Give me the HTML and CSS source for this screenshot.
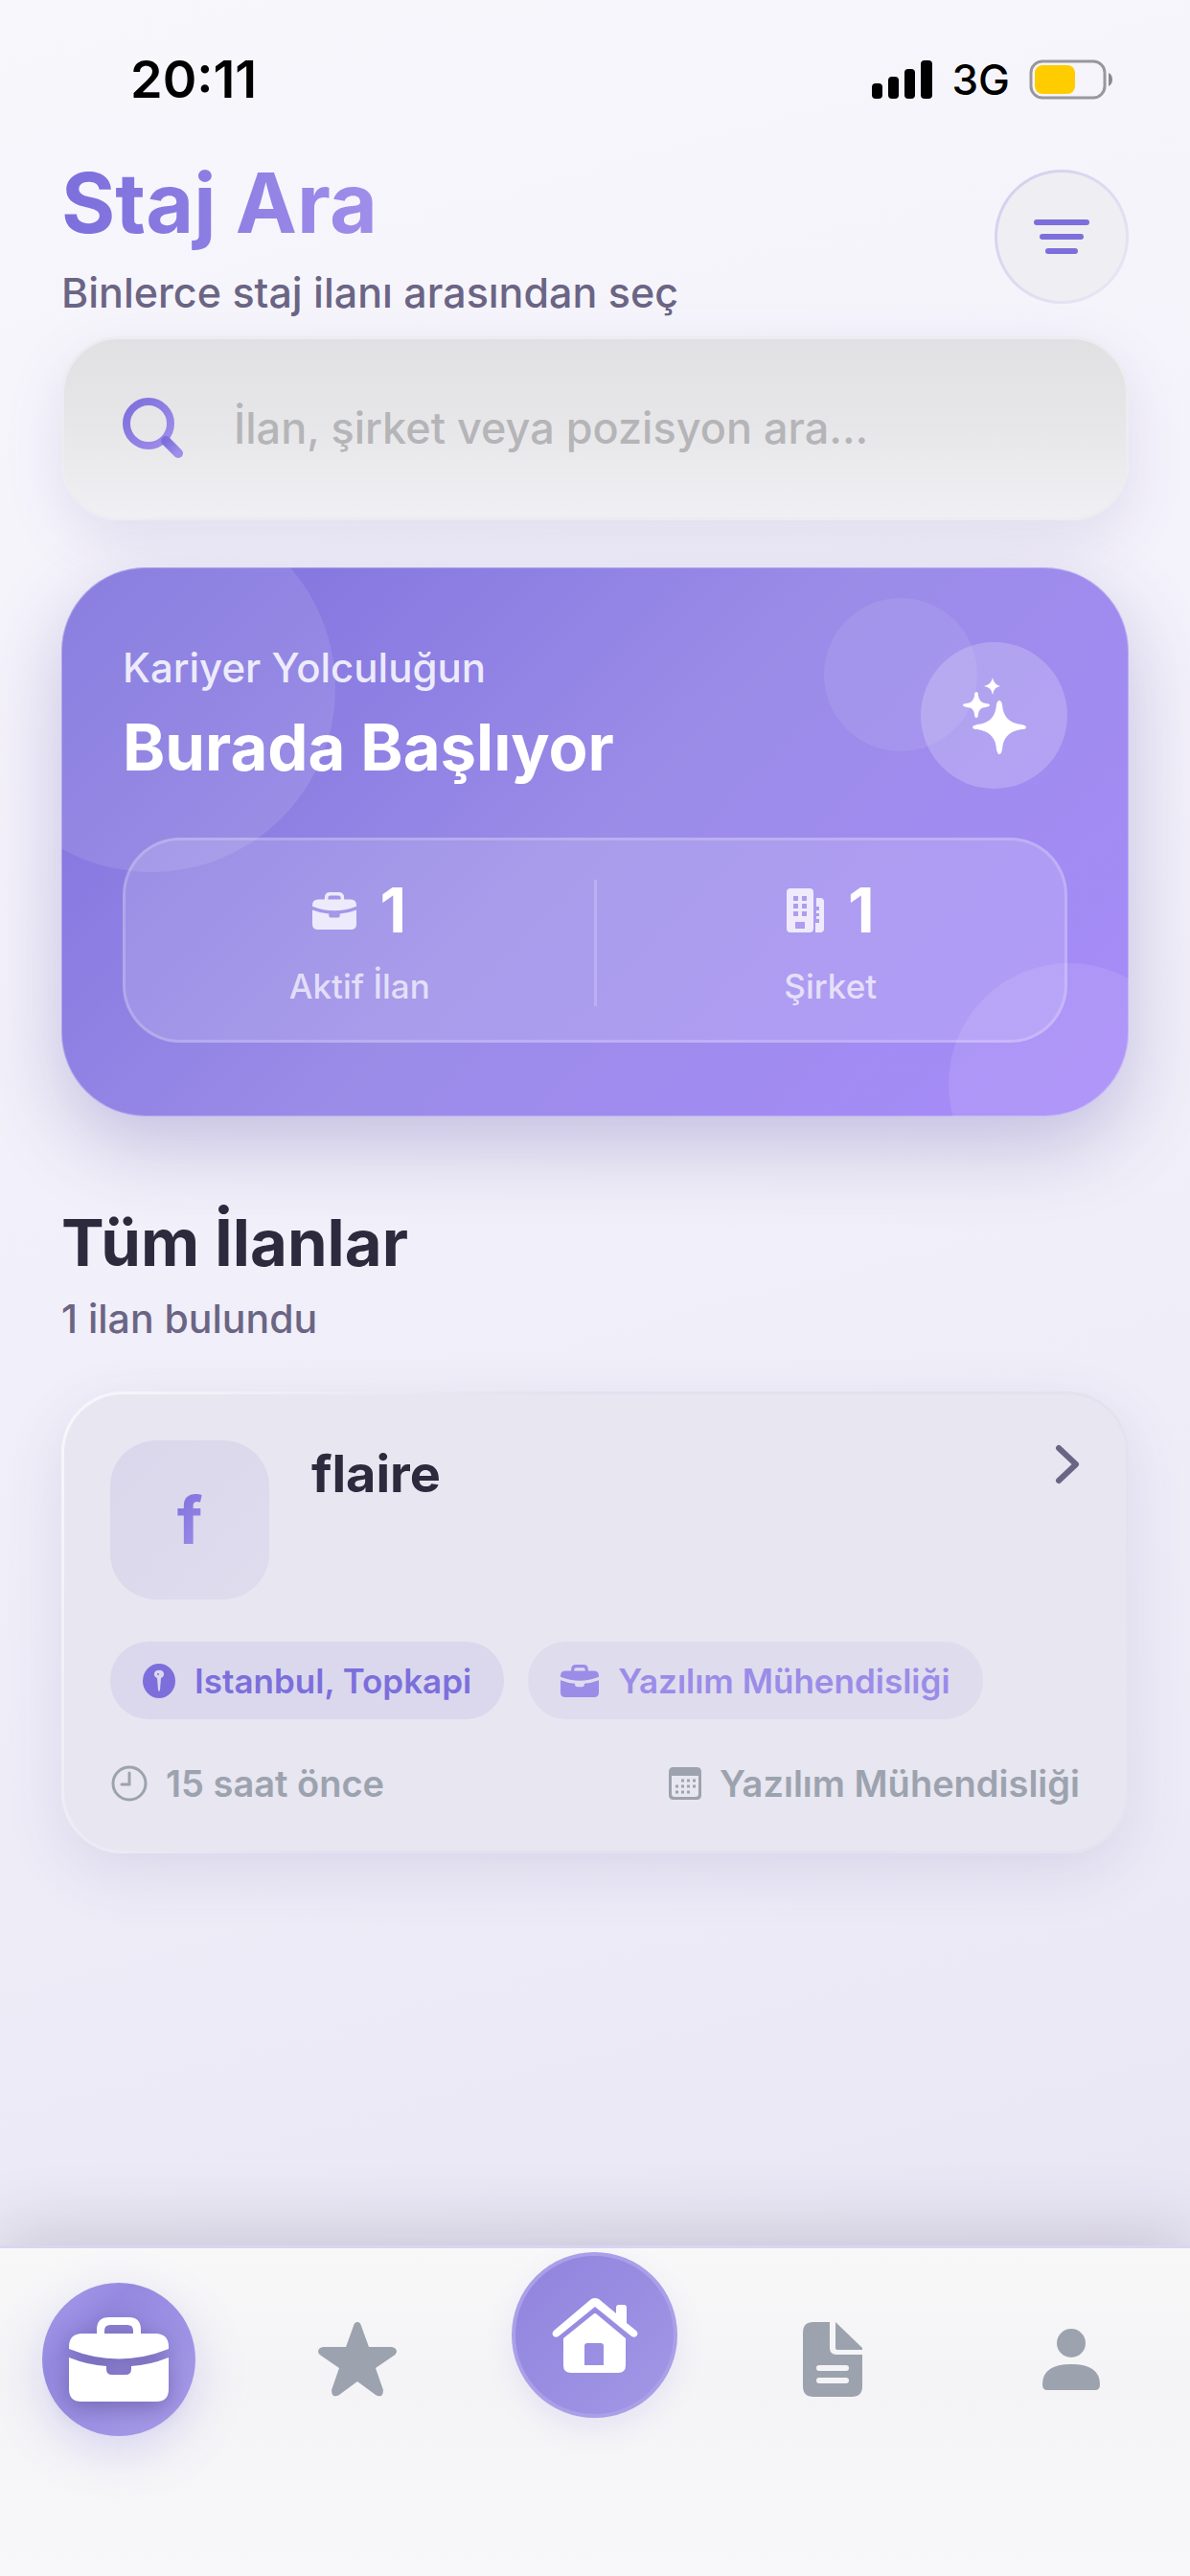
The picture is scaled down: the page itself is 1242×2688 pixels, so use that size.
FILE: index.html
```html
<!DOCTYPE html>
<html lang="tr">
<head>
    <meta charset="UTF-8">
    <meta name="viewport" content="width=device-width, initial-scale=1.0">
    <title>Staj Ara</title>
    <link rel="stylesheet" href="styles.css">
</head>
<body>

<!-- shared icons -->
<svg class="sprite" aria-hidden="true">
    <defs>
        <linearGradient id="violet" x1="0" y1="0" x2="1" y2="1">
            <stop offset="0" stop-color="#7c6fdc"/>
            <stop offset="1" stop-color="#a08eea"/>
        </linearGradient>
        <symbol id="briefcase" viewBox="0 0 104 88">
            <path fill-rule="evenodd" d="M29 17V13Q29 0 42 0H62Q75 0 75 13V17H90Q104 17 104 31V33Q52 54 0 33V31Q0 17 14 17ZM37 17H67V14Q67 8 61 8H43Q37 8 37 14Z"/>
            <path d="M0 42Q20 50 39 51V54Q39 60 45 60H59Q65 60 65 54V51Q84 50 104 42V75Q104 88 91 88H13Q0 88 0 75Z"/>
        </symbol>
    </defs>
</svg>

<div class="app">
    <div class="status-bar">
        <span class="time">20:11</span>
        <div class="status-icons">
            <svg width="64" height="40" viewBox="0 0 64 40">
                <rect x="0" y="24" width="11" height="16" rx="4"/>
                <rect x="17" y="17" width="11" height="23" rx="4"/>
                <rect x="34" y="9" width="11" height="31" rx="4"/>
                <rect x="51" y="0" width="12" height="40" rx="4"/>
            </svg>
            <span class="network">3G</span>
            <svg width="88" height="42" viewBox="0 0 88 42">
                <rect x="2" y="2" width="77" height="38" rx="12" fill="none" stroke="#98979b" stroke-width="3"/>
                <rect x="6" y="6" width="42" height="30" rx="8" fill="#ffcc00"/>
                <path d="M83 14Q87 16 87 21T83 28Z" fill="#8a8a8d"/>
            </svg>
        </div>
    </div>

    <header class="header">
        <div>
            <h1>Staj Ara</h1>
            <p class="subtitle">Binlerce staj ilanı arasından seç</p>
        </div>
        <button class="filter-btn" type="button" aria-label="Filtrele">
            <svg width="60" height="38" viewBox="0 0 60 38" fill="none" stroke="#7c6fdc" stroke-width="6" stroke-linecap="round">
                <path d="M4 4H56M10 19H50M16 34H44"/>
            </svg>
        </button>
    </header>

    <main class="content">
        <label class="search">
            <svg width="64" height="64" viewBox="0 0 64 64" fill="none" stroke="url(#violet)" stroke-linecap="round">
                <circle cx="27" cy="27" r="23" stroke-width="8"/>
                <path d="M45 45L58 58" stroke-width="10"/>
            </svg>
            <input type="search" placeholder="İlan, şirket veya pozisyon ara..." aria-label="İlan ara">
        </label>

        <section class="hero">
            <span class="bubble bubble-left"></span>
            <span class="bubble bubble-top"></span>
            <span class="bubble bubble-right"></span>

            <div class="hero-top">
                <div class="hero-text">
                    <p>Kariyer Yolculuğun</p>
                    <h2>Burada Başlıyor</h2>
                </div>
                <div class="hero-icon">
                    <svg width="66" height="80" viewBox="0 0 66 80" fill="#fff">
                        <path d="M38 24Q40 24 41 28Q42 47 61 49Q66 50 66 52Q66 54 61 54Q42 57 41 75Q40 80 38 80Q36 80 35 75Q34 57 15 54Q10 54 10 52Q10 50 15 49Q34 47 35 28Q36 24 38 24Z"/>
                        <path d="M14 15Q16 15 16 19Q17 26 24 27Q28 27 28 29Q28 30 24 31Q17 31 16 38Q16 42 14 42Q12 42 12 38Q11 31 4 31Q0 30 0 29Q0 27 4 27Q11 26 12 19Q12 15 14 15Z"/>
                        <path d="M31 0Q32 7 39 9Q32 10 31 18Q30 10 22 9Q30 7 31 0Z"/>
                    </svg>
                </div>
            </div>

            <div class="stats">
                <div class="stat">
                    <div class="stat-value">
                        <svg width="46" height="39"><use href="#briefcase"/></svg>
                        <strong>1</strong>
                    </div>
                    <span>Aktif İlan</span>
                </div>
                <div class="stat">
                    <div class="stat-value">
                        <svg width="40" height="46" viewBox="0 0 40 46">
                            <path fill-rule="evenodd" d="M4 0H24Q28 0 28 4V42Q28 46 24 46H4Q0 46 0 42V4Q0 0 4 0ZM7 8V13H12V8ZM16 8V13H21V8ZM7 16V21H12V16ZM16 16V21H21V16ZM7 24V29H12V24ZM16 24V29H21V24ZM9 35V42H19V35Z"/>
                            <path d="M31 10H35Q39 10 39 14V42Q39 46 35 46H30V36H34V32H31V29H34V26H31V23H34V19H31Z"/>
                        </svg>
                        <strong>1</strong>
                    </div>
                    <span>Şirket</span>
                </div>
            </div>
        </section>

        <div class="section-title">
            <h2>Tüm İlanlar</h2>
            <p>1 ilan bulundu</p>
        </div>

        <article class="job-card">
            <div class="job-top">
                <div class="job-logo"><span>f</span></div>
                <h3>flaire</h3>
                <svg class="chevron" width="26" height="42" viewBox="0 0 26 42" fill="none" stroke="#6b6584" stroke-width="6" stroke-linecap="round" stroke-linejoin="round">
                    <path d="M4 4L22 21L4 38"/>
                </svg>
            </div>
            <div class="tags">
                <span class="tag tag-location">
                    <svg width="34" height="36" viewBox="0 0 34 36">
                        <ellipse cx="17" cy="18" rx="17" ry="18" fill="#7c6fdc"/>
                        <path d="M17 7A4 4 0 0 1 19 15L18 27Q17 31 16 27L15 15A4 4 0 0 1 17 7Z" fill="#dbd8ed"/>
                        <circle cx="16" cy="11" r="1" fill="#7c6fdc"/>
                    </svg>
                    Istanbul, Topkapi
                </span>
                <span class="tag tag-field">
                    <svg width="40" height="34"><use href="#briefcase"/></svg>
                    Yazılım Mühendisliği
                </span>
            </div>
            <div class="job-footer">
                <span class="meta">
                    <svg width="40" height="40" viewBox="0 0 40 40" fill="none" stroke="#9ca3af" stroke-width="3" stroke-linecap="round">
                        <circle cx="20" cy="20" r="17"/>
                        <path d="M20 9V21H12"/>
                    </svg>
                    15 saat önce
                </span>
                <span class="meta">
                    <svg width="36" height="36" viewBox="0 0 36 36" fill="#9ca3af">
                        <path fill-rule="evenodd" d="M6 1H30Q35 1 35 6V30Q35 35 30 35H6Q1 35 1 30V6Q1 1 6 1ZM4 10V29Q4 32 7 32H29Q32 32 32 29V10Z"/>
                        <path d="M14 15H29M8 21H29M8 27H23" fill="none" stroke="#9ca3af" stroke-width="3" stroke-dasharray="3 3"/>
                    </svg>
                    Yazılım Mühendisliği
                </span>
            </div>
        </article>
    </main>

    <nav class="tab-bar">
        <a class="tab tab-active" href="#" aria-label="İlanlar">
            <svg width="104" height="88"><use href="#briefcase"/></svg>
        </a>
        <a class="tab" href="#" aria-label="Favoriler">
            <svg width="82" height="78" viewBox="0 0 82 78">
                <path d="M41 0Q44 0 45 4L53 26H77Q82 27 82 31Q81 34 79 35L60 48L68 71Q68 75 66 77Q63 78 60 76L41 62L22 76Q19 78 16 77Q14 75 14 71L22 48L3 35Q0 33 0 31Q0 27 5 26H29L37 4Q38 0 41 0Z"/>
            </svg>
        </a>
        <a class="tab tab-home" href="#" aria-label="Ana sayfa">
            <svg width="90" height="78" viewBox="0 0 90 78" fill="#fff">
                <path d="M41 1Q45 -1 49 1L67 16V10Q67 7 70 7H75Q78 7 78 10V26L88 34Q91 37 88 40Q85 42 82 39L45 9L8 39Q5 42 2 40Q-1 37 2 34Z"/>
                <path fill-rule="evenodd" d="M43 17Q45 15 47 17L77 42V70Q77 78 69 78H20Q12 78 12 70V42ZM37 47Q34 47 34 50V70H54V50Q54 47 51 47Z"/>
            </svg>
        </a>
        <a class="tab" href="#" aria-label="Başvurular">
            <svg width="62" height="78" viewBox="0 0 62 78">
                <path fill-rule="evenodd" d="M11 0H28V27Q28 34 35 34H62V67Q62 78 51 78H11Q0 78 0 67V11Q0 0 11 0ZM17 45Q14 45 14 48T17 51H45Q48 51 48 48T45 45ZM17 58Q14 58 14 61T17 64H45Q48 64 48 61T45 58Z"/>
                <path d="M34 0L62 27V29H36Q34 29 34 27Z"/>
            </svg>
        </a>
        <a class="tab" href="#" aria-label="Profil">
            <svg width="60" height="66" viewBox="0 0 60 66">
                <circle cx="30" cy="16" r="15"/>
                <path d="M0 59Q0 38 30 38T60 59Q60 65 55 65H5Q0 65 0 59Z"/>
            </svg>
        </a>
    </nav>
</div>

</body>
</html>
```
FILE: styles.css
```css
* {
    box-sizing: border-box;
    margin: 0;
    padding: 0;
}

body {
    font-family: Inter, "Liberation Sans", sans-serif;
    font-weight: 500;
    color: #2d2a3e;
    background: #f3f1fa;
}

svg {
    display: block;
    flex-shrink: 0;
}

.sprite {
    position: absolute;
    width: 0;
    height: 0;
}

.app {
    display: flex;
    flex-direction: column;
    min-height: 100vh;
    background: linear-gradient(165deg, #f8f7fc 0%, #f3f1fa 35%, #eceaf6 75%, #e6e3f3 100%);
}

/* status bar */
.status-bar {
    display: flex;
    justify-content: space-between;
    align-items: center;
    padding: 51px 80px 47px 136px;
    line-height: 64px;
    color: #000;
}

.time {
    font-size: 54px;
    font-weight: 600;
}

.status-icons {
    display: flex;
    align-items: center;
    gap: 20px;
}

.network {
    font-size: 44px;
}

/* header */
.header {
    display: flex;
    justify-content: space-between;
    align-items: center;
    padding: 0 64px;
}

h1 {
    width: fit-content;
    font-size: 86px;
    line-height: 100px;
    font-weight: 700;
    color: transparent;
    background: linear-gradient(90deg, #7c6fdc, #a08eea);
    background-clip: text;
    -webkit-background-clip: text;
}

.subtitle {
    margin-top: 17px;
    font-size: 43px;
    line-height: 52px;
    color: #6b6584;
}

.filter-btn {
    display: flex;
    justify-content: center;
    align-items: center;
    width: 140px;
    height: 140px;
    border: 3px solid transparent;
    border-radius: 50%;
    background: linear-gradient(#efeef2, #efeef2) padding-box, linear-gradient(135deg, #d2ccee, #ebe8f5) border-box;
}

.content {
    padding: 20px 64px 64px;
}

/* search */
.search {
    display: flex;
    align-items: center;
    gap: 52px;
    height: 192px;
    padding: 0 61px;
    border: 3px solid #edecf1;
    border-radius: 60px;
    background: linear-gradient(#e1e1e3, #e7e7e9 50%, #f0f0f4);
    box-shadow: 0 20px 60px rgba(90, 80, 160, 0.13);
}

.search input {
    flex: 1;
    min-width: 0;
    border: 0;
    outline: 0;
    background: none;
    font: 500 45px/56px Inter, "Liberation Sans", sans-serif;
    color: #2d2a3e;
}

.search input::placeholder {
    color: #b5b5b8;
}

/* hero */
.hero {
    position: relative;
    overflow: hidden;
    margin-top: 49px;
    padding: 78px 64px 77px;
    border-radius: 88px;
    color: #fff;
    background: linear-gradient(135deg, #7c6fdc 0%, #9b8ce8 50%, #a78bfa 100%);
    box-shadow: inset 0 0 0 1px rgba(255, 255, 255, 0.3), 0 30px 80px rgba(80, 65, 160, 0.28);
}

.bubble {
    position: absolute;
    border-radius: 50%;
    background: rgba(255, 255, 255, 0.1);
}

.bubble-left {
    left: -98px;
    top: -66px;
    width: 384px;
    height: 384px;
}

.bubble-top {
    right: 158px;
    top: 32px;
    width: 160px;
    height: 160px;
    background: rgba(255, 255, 255, 0.08);
}

.bubble-right {
    right: -64px;
    bottom: -92px;
    width: 252px;
    height: 252px;
}

.hero-top {
    position: relative;
    display: flex;
    justify-content: space-between;
    align-items: center;
}

.hero-text p {
    font-size: 42px;
    line-height: 50px;
    color: rgba(255, 255, 255, 0.85);
}

.hero-text h2 {
    margin-top: 16px;
    font-size: 67px;
    line-height: 84px;
    font-weight: 700;
}

.hero-icon {
    display: flex;
    justify-content: center;
    align-items: center;
    width: 153px;
    height: 153px;
    border-radius: 50%;
    background: rgba(255, 255, 255, 0.2);
}

.stats {
    position: relative;
    display: flex;
    align-items: center;
    margin-top: 51px;
    padding: 41px 0 35px;
    border: 3px solid rgba(255, 255, 255, 0.2);
    border-radius: 60px;
    background: rgba(255, 255, 255, 0.15);
}

.stat {
    flex: 1;
    display: flex;
    flex-direction: column;
    align-items: center;
    gap: 26px;
    font-size: 35px;
    line-height: 42px;
    color: rgba(255, 255, 255, 0.7);
}

.stat + .stat {
    border-left: 3px solid rgba(255, 255, 255, 0.2);
}

.stat-value {
    display: flex;
    align-items: center;
    gap: 24px;
}

.stat-value svg {
    fill: rgba(255, 255, 255, 0.8);
}

.stat-value strong {
    font-size: 64px;
    line-height: 64px;
    font-weight: 700;
    color: #fff;
}

/* listings */
.section-title {
    margin-top: 90px;
}

.section-title h2 {
    font-size: 67px;
    line-height: 84px;
    font-weight: 700;
}

.section-title p {
    margin-top: 13px;
    font-size: 41px;
    line-height: 48px;
    color: #6b6584;
}

.job-card {
    margin-top: 52px;
    padding: 48px;
    border: 3px solid transparent;
    border-radius: 64px;
    background: linear-gradient(#e8e6f0, #e8e6f0) padding-box, linear-gradient(120deg, #f8f7fb 0%, #e3e0ef 40%, #e5e3ef 100%) border-box;
    box-shadow: 0 20px 60px rgba(90, 80, 160, 0.13);
}

.job-top {
    display: flex;
    align-items: flex-start;
}

.job-logo {
    display: flex;
    justify-content: center;
    align-items: center;
    width: 166px;
    height: 166px;
    border-radius: 48px;
    font-size: 67px;
    font-weight: 700;
    background: linear-gradient(135deg, #dad7ec, #dfdcee);
}

.job-logo span {
    color: transparent;
    background: linear-gradient(135deg, #7c6fdc, #a08eea);
    background-clip: text;
    -webkit-background-clip: text;
}

.job-top h3 {
    flex: 1;
    margin: 3px 0 0 44px;
    font-size: 54px;
    line-height: 64px;
    font-weight: 700;
}

.chevron {
    margin-top: 4px;
}

.tags {
    display: flex;
    gap: 25px;
    margin-top: 44px;
}

.tag {
    display: flex;
    align-items: center;
    gap: 20px;
    height: 81px;
    padding: 0 34px;
    border-radius: 40px;
    font-size: 35px;
    font-weight: 600;
    white-space: nowrap;
}

.tag-location {
    color: #7c6fdc;
    background: #dbd8ed;
}

.tag-field {
    color: #9b8ce8;
    fill: #9b8ce8;
    background: #dfdcee;
}

.job-footer {
    display: flex;
    justify-content: space-between;
    margin-top: 45px;
}

.meta {
    display: flex;
    align-items: center;
    gap: 18px;
    font-size: 38px;
    line-height: 44px;
    font-weight: 600;
    color: #9ca3af;
}

/* bottom tab bar */
.tab-bar {
    display: grid;
    grid-template-columns: repeat(5, 1fr);
    justify-items: center;
    align-items: start;
    margin-top: auto;
    padding: 36px 0 146px;
    border-top: 3px solid #dad5f2;
    background: linear-gradient(#f8f8f9, #f4f4f6 40%, #f8f8fa);
    box-shadow: 0 -10px 70px rgba(60, 50, 80, 0.2);
}

.tab {
    display: flex;
    justify-content: center;
    align-items: center;
    width: 160px;
    height: 160px;
    border-radius: 50%;
    fill: #9ca3af;
}

.tab-active {
    fill: #fff;
    background: linear-gradient(135deg, #a89cea 0%, #9489e0 30%, #a99cea 100%);
    box-shadow: 0 16px 50px rgba(124, 111, 220, 0.25);
}

.tab-active svg {
    filter: drop-shadow(0 6px 12px rgba(40, 30, 90, 0.35));
}

.tab-home {
    width: 173px;
    height: 173px;
    margin-top: -32px;
    border: 4px solid #aa9fe8;
    background: linear-gradient(135deg, #8f83de, #a397e6);
    box-shadow: 0 12px 30px rgba(124, 111, 220, 0.12);
}
```
